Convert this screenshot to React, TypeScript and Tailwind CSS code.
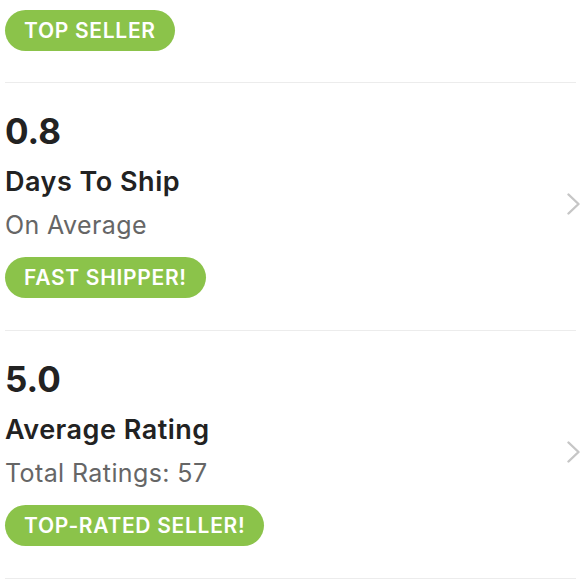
interface StatProps {
  value: string
  title: string
  subtitle: string
  badge: string
}

function Badge({ label }: { label: string }) {
  return (
    <span className="inline-flex h-[41px] items-center rounded-full bg-[#8bc34a] px-[19px] text-[21px] font-semibold uppercase tracking-[0.7px] text-white">
      {label}
    </span>
  )
}

function Chevron() {
  return (
    <svg width="15" height="24" viewBox="0 0 15 24" fill="none" className="mr-[-5px] shrink-0">
      <polyline points="2.5,2.5 12.5,12 2.5,21.5" stroke="#c6c6c6" strokeWidth="2.4" strokeLinecap="round" strokeLinejoin="round" />
    </svg>
  )
}

function StatRow({ value, title, subtitle, badge }: StatProps) {
  return (
    <div className="flex items-center border-b border-[#ececec] pt-[26px] pb-[32px]">
      <div className="flex-1">
        <p className="text-[35px] font-bold leading-[44px] text-[#222]">{value}</p>
        <p className="mt-[12px] text-[27px] font-semibold leading-[34px] tracking-[0.5px] text-[#222]">{title}</p>
        <p className="mt-[10px] text-[25px] leading-[32px] tracking-[0.4px] text-[#666]">{subtitle}</p>
        <div className="mt-[16px]">
          <Badge label={badge} />
        </div>
      </div>
      <Chevron />
    </div>
  )
}

export default function App() {
  return (
    <div className="h-[580px] w-[580px] overflow-hidden bg-white pl-[5px] pr-[4px] font-['Inter',sans-serif]">
      <div className="border-b border-[#ececec] pt-[10px] pb-[31px]">
        <Badge label="Top Seller" />
      </div>
      <StatRow value="0.8" title="Days To Ship" subtitle="On Average" badge="Fast Shipper!" />
      <StatRow value="5.0" title="Average Rating" subtitle="Total Ratings: 57" badge="Top-Rated Seller!" />
    </div>
  )
}
